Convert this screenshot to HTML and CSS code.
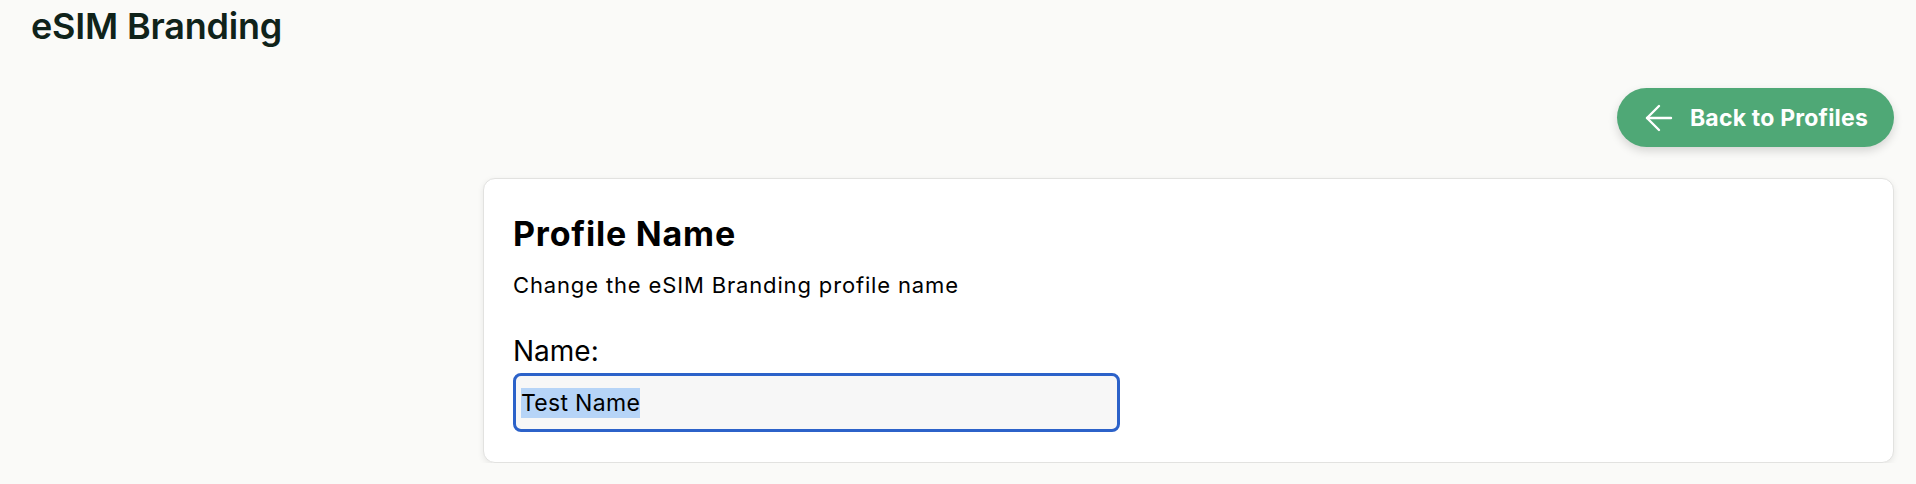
FILE: index.html
```html
<!DOCTYPE html>
<html lang="en">
<head>
    <title>eSIM Branding</title>
    <link rel="stylesheet" href="styles.css">
</head>
<body>
    <div class="page">
        <h1 class="page-title">eSIM Branding</h1>

        <div class="toolbar">
            <button class="back-btn">
                <svg width="24" height="24" viewBox="5 5 14 14" fill="none" stroke="currentColor" stroke-width="1.4" stroke-linecap="round" stroke-linejoin="round">
                    <path d="M19 12H5"/>
                    <path d="M12 19l-7-7 7-7"/>
                </svg>
                <span>Back to Profiles</span>
            </button>
        </div>

        <div class="content">
            <div class="card">
                <h2>Profile Name</h2>
                <p class="card-desc">Change the eSIM Branding profile name</p>
                <label class="field-label" for="name">Name:</label>
                <div class="field">
                    <span class="selected">Test Name</span>
                </div>
            </div>
        </div>
    </div>
</body>
</html>
```

FILE: styles.css
```css
:root {
    --bg-color: #fafaf8;
    --title-color: #10231a;
    --primary-color: #4fa876;
    --border-color: #e2e2e0;
    --focus-color: #2c62c9;
}

body {
    background-color: var(--bg-color);
    color: #000;
    font-family: Inter, 'Noto Sans', sans-serif;
    margin: 0;
}

.page {
    padding: 0 22px 0 31px;
}

.page-title {
    margin: 0;
    padding-top: 4px;
    font-size: 36px;
    font-weight: 600;
    line-height: 44px;
    color: var(--title-color);
    letter-spacing: -0.2px;
}

.toolbar {
    display: flex;
    justify-content: flex-end;
    margin-top: 40px;
}

.back-btn {
    display: flex;
    align-items: center;
    gap: 19px;
    height: 59px;
    padding: 0 26px 0 30px;
    background-color: var(--primary-color);
    color: #fff;
    border: none;
    border-radius: 30px;
    font-family: inherit;
    font-size: 23px;
    font-weight: 700;
    letter-spacing: 0.2px;
    box-shadow: 0 4px 10px rgba(0, 0, 0, 0.15);
    cursor: pointer;
}

.back-btn svg {
    overflow: visible;
}

.content {
    margin-top: 31px;
    padding-left: 452px;
}

.card {
    background-color: #fff;
    border: 1px solid var(--border-color);
    border-radius: 12px;
    box-shadow: 0 2px 6px rgba(0, 0, 0, 0.08);
    padding: 37px 29px 30px;
}

.card h2 {
    margin: 0;
    font-size: 34px;
    font-weight: 700;
    line-height: 36px;
    letter-spacing: 0.8px;
}

.card-desc {
    margin: 20px 0 0;
    font-size: 22px;
    line-height: 26px;
    letter-spacing: 0.85px;
}

.field-label {
    display: block;
    margin-top: 36px;
    font-size: 28px;
    line-height: 34px;
}

.field {
    display: flex;
    align-items: center;
    box-sizing: border-box;
    width: 607px;
    height: 59px;
    margin-top: 5px;
    padding: 0 5px;
    background-color: #f7f7f7;
    border: 3px solid var(--focus-color);
    border-radius: 8px;
    font-size: 23px;
    letter-spacing: 0.3px;
}

.selected {
    background-color: #b6d4f7;
    line-height: 30px;
}
```
